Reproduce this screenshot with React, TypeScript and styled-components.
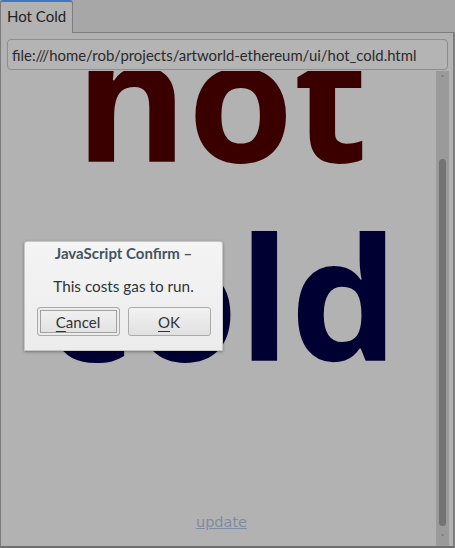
import React from "react";
import styled, { createGlobalStyle } from "styled-components";

const Global = createGlobalStyle`
  html, body { margin: 0; padding: 0; background: #a7a7a7; }
  #root { width: 455px; height: 548px; }
`;

const Window = styled.div`
  width: 455px;
  height: 548px;
  display: flex;
  flex-direction: column;
  background: #a7a7a7;
  position: relative;
  overflow: hidden;
  font-family: "Lato", "DejaVu Sans", sans-serif;
`;

const TabBar = styled.div`
  height: 33px;
  display: flex;
  align-items: stretch;
  border-bottom: 1px solid #7e7e7e;
  box-sizing: border-box;
`;

const Tab = styled.div`
  width: 73px;
  box-sizing: border-box;
  background: #b2b2b2;
  border-top: 2px solid #3f78bf;
  border-left: 1px solid #7a7a7a;
  border-right: 1px solid #7e7e7e;
  border-radius: 3px 3px 0 0;
  margin-bottom: -1px;
  padding: 5px 0 0 6px;
  font-size: 15px;
  color: #222;
`;

const Panel = styled.div`
  flex: 1;
  display: flex;
  flex-direction: column;
  background: #b2b2b2;
  border-left: 1px solid #7a7a7a;
  border-right: 2px solid #7e7e7e;
  border-bottom: 2px solid #6e6e6e;
  min-height: 0;
`;

const UrlBar = styled.div`
  margin: 6px 5px 1px 6px;
  height: 31px;
  box-sizing: border-box;
  border: 1px solid #8e8e8e;
  border-radius: 4px;
  background: #b4b4b4;
  display: flex;
  align-items: center;
  padding-left: 4px;
  font-size: 14.9px;
  color: #2a2a2a;
  white-space: nowrap;
  overflow: hidden;
`;

const WebView = styled.div`
  flex: 1;
  display: flex;
  min-height: 0;
`;

const Content = styled.div`
  flex: 1;
  overflow: hidden;
  position: relative;
`;

const Scrolled = styled.div`
  margin-top: -75px;
  padding-left: 6px;
  text-align: center;
  font-family: "Open Sans", "DejaVu Sans", sans-serif;
`;

const Big = styled.div<{ $c: string }>`
  font-weight: bold;
  font-size: 171px;
  line-height: 199px;
  color: ${(p) => p.$c};
`;

const Link = styled.a`
  display: block;
  margin-top: 120px;
  font-family: "DejaVu Sans", sans-serif;
  font-size: 14.5px;
  color: #7d8ca3;
  text-decoration: underline;
`;

const Scrollbar = styled.div`
  width: 13px;
  margin-right: 4px;
  background: #9a9a9a;
  display: flex;
  flex-direction: column;
  align-items: center;
  padding: 4px 0 3px;
  box-sizing: border-box;
`;

const Arrow = styled.div`
  font-size: 9px;
  line-height: 9px;
  color: #6a6a6a;
  font-family: "DejaVu Sans", sans-serif;
`;

const Track = styled.div`
  flex: 1;
  width: 100%;
  display: flex;
  flex-direction: column;
  align-items: center;
  padding: 75px 0 8px;
  box-sizing: border-box;
`;

const Thumb = styled.div`
  flex: 1;
  width: 7px;
  background: #737373;
  border-radius: 4px;
`;

const Dialog = styled.div`
  position: absolute;
  left: 24px;
  top: 241px;
  width: 199px;
  height: 110px;
  box-sizing: border-box;
  background: linear-gradient(#f4f4f4, #ececec);
  border: 1px solid #c8c8c8;
  border-radius: 3px 3px 0 0;
  box-shadow: 0 1px 3px rgba(0, 0, 0, 0.35);
  display: flex;
  flex-direction: column;
  align-items: center;
  font-family: "Lato", "DejaVu Sans", sans-serif;
`;

const Title = styled.div`
  margin-top: 2px;
  font-weight: bold;
  font-size: 15px;
  color: #45545f;
`;

const Message = styled.div`
  margin-top: 15px;
  font-size: 15.3px;
  color: #2e3436;
`;

const Buttons = styled.div`
  margin-top: 12px;
  display: flex;
  gap: 8px;
`;

const Button = styled.div<{ $focus?: boolean }>`
  width: 83px;
  height: 29px;
  box-sizing: border-box;
  border: 1px solid #aaaaaa;
  border-radius: 3px;
  background: linear-gradient(#f2f2f2, #e0e0e0);
  display: flex;
  align-items: center;
  justify-content: center;
  font-size: 15px;
  color: #2e3436;
  box-shadow: ${(p) => (p.$focus ? "inset 0 0 0 2px #ececec, inset 0 0 0 3px #a0a0a0" : "none")};
  u { text-decoration-thickness: 1px; text-underline-offset: 3px; }
`;

export default function App() {
  return (
    <>
      <Global />
      <Window>
        <TabBar>
          <Tab>Hot Cold</Tab>
        </TabBar>
        <Panel>
          <UrlBar>file:///home/rob/projects/artworld-ethereum/ui/hot_cold.html</UrlBar>
          <WebView>
            <Content>
              <Scrolled>
                <Big $c="#3a0000">hot</Big>
                <Big $c="#000033">cold</Big>
                <Link>update</Link>
              </Scrolled>
            </Content>
            <Scrollbar>
              <Arrow>˄</Arrow>
              <Track>
                <Thumb />
              </Track>
              <Arrow>˅</Arrow>
            </Scrollbar>
          </WebView>
        </Panel>
        <Dialog>
          <Title>JavaScript Confirm –</Title>
          <Message>This costs gas to run.</Message>
          <Buttons>
            <Button $focus>
              <span><u>C</u>ancel</span>
            </Button>
            <Button>
              <span><u>O</u>K</span>
            </Button>
          </Buttons>
        </Dialog>
      </Window>
    </>
  );
}
